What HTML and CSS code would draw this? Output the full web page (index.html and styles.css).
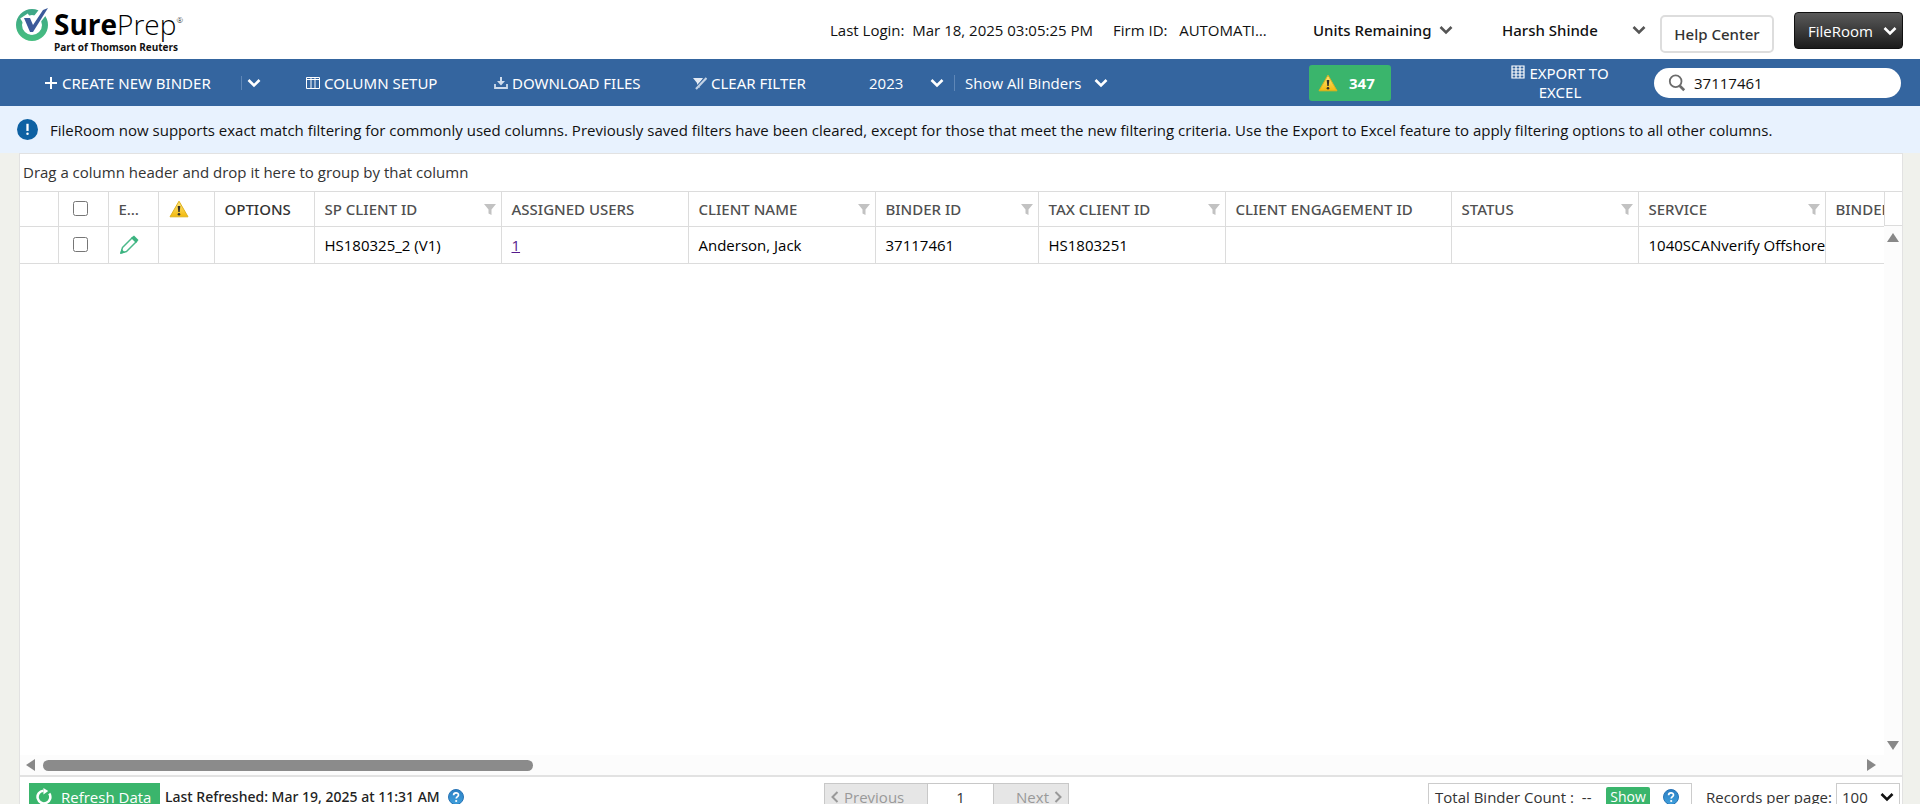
FILE: index.html
```html
<!DOCTYPE html>
<html lang="en">
<head>
<meta charset="utf-8">
<title>SurePrep FileRoom</title>
<link rel="stylesheet" href="styles.css">
</head>
<body>
<svg class="defs" aria-hidden="true">
  <defs>
    <linearGradient id="gold" x1="0" y1="0" x2="0" y2="1"><stop offset="0" stop-color="#ffe680"/><stop offset="1" stop-color="#f2b90c"/></linearGradient>
    <linearGradient id="sky" x1="0" y1="0" x2="0" y2="1"><stop offset="0" stop-color="#2b7fc4"/><stop offset="1" stop-color="#3fa0dc"/></linearGradient>
    <linearGradient id="ring" x1="0" y1="0" x2="0" y2="1"><stop offset="0" stop-color="#3fa787"/><stop offset="1" stop-color="#46bd80"/></linearGradient>
  </defs>
  <symbol id="chev" viewBox="0 0 14 10"><path d="M1.5 2 7 7.5 12.500 2" fill="none" stroke="currentColor" stroke-width="2.600"/></symbol>
  <symbol id="warn" viewBox="0 0 20 18"><path d="M10 1.200 19 16.800H1Z" fill="url(#gold)" stroke="#e0b21c" stroke-width="1" stroke-linejoin="round"/><path d="M8.700 6h2.600l-.6 6H9.300Z" fill="#33302a"/><circle cx="10" cy="14.200" r="1.300" fill="#33302a"/></symbol>
  <symbol id="funnel" viewBox="0 0 14 12"><path d="M1 1h12L8.500 6.500V12l-3-1.500v-4Z" fill="#c2c2c2"/></symbol>
  <symbol id="help" viewBox="0 0 16 16"><circle cx="8" cy="8" r="7.500" fill="url(#sky)" stroke="#2874b5"/><path d="M5.600 6.200c0-3.200 4.900-3.100 4.900-.2 0 1.600-2.300 1.600-2.300 3.500" fill="none" stroke="#fff" stroke-width="1.700"/><circle cx="8.200" cy="12" r="1.100" fill="#fff"/></symbol>
</svg>

<header class="top">
  <div class="logo">
    <svg class="logo-mark" viewBox="0 0 34 34"><circle cx="16" cy="18" r="13" fill="none" stroke="url(#ring)" stroke-width="6"/><path d="M8 9 15 20 30 1" fill="none" stroke="#fff" stroke-width="9"/><path d="M8 11h6l3 7L27 3l5-2-15 24h-3Z" fill="#3c5a9a"/></svg>
    <div class="logo-text">
      <div class="logo-name"><b>Sure</b>Prep<sup>®</sup></div>
      <div class="logo-sub">Part of Thomson Reuters</div>
    </div>
  </div>
  <div class="login">Last Login:&nbsp; Mar 18, 2025 03:05:25 PM</div>
  <div class="firm">Firm ID:&nbsp;&nbsp; AUTOMATI…</div>
  <button class="menu units">Units Remaining<svg class="chev"><use href="#chev"/></svg></button>
  <button class="menu user">Harsh Shinde<svg class="chev"><use href="#chev"/></svg></button>
  <button class="help-center">Help Center</button>
  <button class="fileroom">FileRoom<svg class="chev"><use href="#chev"/></svg></button>
</header>

<nav class="toolbar">
  <button class="tool create"><svg class="ico" viewBox="0 0 14 14"><path d="M7 1v12M1 7h12" stroke="currentColor" stroke-width="2"/></svg>CREATE NEW BINDER</button>
  <button class="tool split" aria-label="More create options"><svg class="chev"><use href="#chev"/></svg></button>
  <button class="tool columns"><svg class="ico" viewBox="0 0 14 14"><path d="M.5 1.500h13v11H.5ZM.5 3.500h13M5 2v10M9 2v10" fill="none" stroke="currentColor"/></svg>COLUMN SETUP</button>
  <button class="tool download"><svg class="ico" viewBox="0 0 14 14"><path d="M1 8v4h12V8" fill="none" stroke="#cfdcec" stroke-width="1.800"/><path d="M6 1h2v4h3L7 9.500 3 5h3Z" fill="#cfdcec"/></svg>DOWNLOAD FILES</button>
  <button class="tool clear"><svg class="ico" viewBox="0 0 14 14"><path d="M0 2h10L6.500 7v5L4 10V7Z" fill="#e4ebf4"/><path d="M2 13 13 2" stroke="#34659f" stroke-width="3"/><path d="M3 13 13.500 2" stroke="#c3d2e5" stroke-width="2.200"/></svg>CLEAR FILTER</button>
  <div class="pick year"><select aria-label="Year"><option>2023</option></select><svg class="chev"><use href="#chev"/></svg></div>
  <div class="pick binders"><select aria-label="Binders"><option>Show All Binders</option></select><svg class="chev"><use href="#chev"/></svg></div>
  <button class="alerts"><svg class="warn"><use href="#warn"/></svg>347</button>
  <button class="tool export"><span><svg class="ico" viewBox="0 0 14 14"><path d="M1 1h12v12H1ZM1 4h12M1 7h12M1 10h12M5 1v12M9 1v12" fill="none" stroke="currentColor" stroke-width="1.200"/></svg>EXPORT TO EXCEL</span></button>
  <label class="search"><svg viewBox="0 0 20 20"><circle cx="8.500" cy="8" r="6.500" fill="none" stroke="#6b6b6b" stroke-width="2"/><path d="m13 13 5 5" stroke="#6b6b6b" stroke-width="3"/></svg><input type="text" value="37117461" aria-label="Search"></label>
</nav>

<div class="notice">
  <svg viewBox="0 0 22 22"><circle cx="11" cy="11" r="11" fill="#0d61a3"/><path d="M11 5v7.500" stroke="#fff" stroke-width="2.400"/><circle cx="11" cy="15.500" r="1.300" fill="#fff"/></svg>
  <span>FileRoom now supports exact match filtering for commonly used columns. Previously saved filters have been cleared, except for those that meet the new filtering criteria. Use the Export to Excel feature to apply filtering options to all other columns.</span>
</div>

<main class="panel">
  <div class="group-drop">Drag a column header and drop it here to group by that column</div>
  <div class="grid">
    <div class="grid-view">
      <table>
        <colgroup><col class="c-tiny"><col class="c-check"><col class="c-check"><col class="c-warn"><col class="c-opt"><col class="c-mid"><col class="c-mid"><col class="c-mid"><col class="c-id"><col class="c-mid"><col class="c-wide"><col class="c-mid"><col class="c-mid"><col class="c-mid"></colgroup>
        <thead><tr>
          <th></th>
          <th><input type="checkbox" aria-label="Select all"></th>
          <th>E…</th>
          <th><svg class="warn"><use href="#warn"/></svg></th>
          <th class="dark">OPTIONS</th>
          <th><div>SP CLIENT ID<svg class="funnel"><use href="#funnel"/></svg></div></th>
          <th>ASSIGNED USERS</th>
          <th><div>CLIENT NAME<svg class="funnel"><use href="#funnel"/></svg></div></th>
          <th><div>BINDER ID<svg class="funnel"><use href="#funnel"/></svg></div></th>
          <th><div>TAX CLIENT ID<svg class="funnel"><use href="#funnel"/></svg></div></th>
          <th>CLIENT ENGAGEMENT ID</th>
          <th><div>STATUS<svg class="funnel"><use href="#funnel"/></svg></div></th>
          <th><div>SERVICE<svg class="funnel"><use href="#funnel"/></svg></div></th>
          <th>BINDER</th>
        </tr></thead>
        <tbody><tr>
          <td></td>
          <td><input type="checkbox" aria-label="Select binder"></td>
          <td><svg class="pencil" viewBox="0 0 20 20"><path d="M2 18 3.500 12.500 13.500 2.500l4 4-10 10Z" fill="#fff" stroke="#4bb98a" stroke-width="1.500" stroke-linejoin="round"/><path d="m12 3 3-2.500 4.500 4.500L17 8Z" fill="#3cb480"/><path d="m1 19 1.500-5 3.500 3.500Z" fill="#3cb480"/></svg></td>
          <td></td>
          <td></td>
          <td>HS180325_2 (V1)</td>
          <td><a href="#">1</a></td>
          <td>Anderson, Jack</td>
          <td>37117461</td>
          <td>HS1803251</td>
          <td></td>
          <td></td>
          <td>1040SCANverify Offshore</td>
          <td></td>
        </tr></tbody>
      </table>
    </div>
    <div class="vside">
      <div class="corner"></div>
      <div class="vbar"><svg viewBox="0 0 12 9"><path d="M6 0 12 9H0Z"/></svg><svg viewBox="0 0 12 9"><path d="M6 9 12 0H0Z"/></svg></div>
    </div>
    <div class="hbar"><svg viewBox="0 0 9 12"><path d="M0 6 9 0v12Z"/></svg><div class="track"><div class="thumb"></div></div><svg viewBox="0 0 9 12"><path d="M9 6 0 0v12Z"/></svg></div>
    <div class="nook"></div>
  </div>
  <footer class="foot">
    <div class="foot-left">
      <button class="refresh"><svg viewBox="0 0 16 16"><path d="M12.500 5.200A6 6 0 1 1 7 2.500" fill="none" stroke="#fff" stroke-width="2.400"/><path d="M7 0v6l4.500-3.200Z" fill="#fff"/></svg>Refresh Data</button>
      <span class="refreshed">Last Refreshed: Mar 19, 2025 at 11:31 AM</span>
      <svg class="help"><use href="#help"/></svg>
    </div>
    <div class="pager">
      <button disabled><svg viewBox="0 0 8 12"><path d="M6.500 1 1.500 6l5 5" fill="none" stroke="currentColor" stroke-width="2"/></svg>Previous</button>
      <input type="text" value="1" aria-label="Page">
      <button disabled>Next<svg viewBox="0 0 8 12"><path d="m1.500 1 5 5-5 5" fill="none" stroke="currentColor" stroke-width="2"/></svg></button>
    </div>
    <div class="foot-right">
      <div class="count"><span>Total Binder Count :&nbsp; --</span><button>Show</button><svg class="help"><use href="#help"/></svg></div>
      <label for="rpp">Records per page:</label>
      <div class="rpp"><select id="rpp"><option>100</option></select><svg class="chev"><use href="#chev"/></svg></div>
    </div>
  </footer>
</main>
</body>
</html>
```
FILE: styles.css
```css
* { box-sizing: border-box; }
body {
  margin: 0;
  height: 100vh;
  overflow: hidden;
  display: flex;
  flex-direction: column;
  background: #f0f1ec;
  color: #111;
  font: 15px/20px "Open Sans", sans-serif;
}
button, input, select { font: inherit; color: inherit; }
button { border: 0; padding: 0; background: none; white-space: nowrap; }
.defs { position: absolute; width: 0; height: 0; }
.chev { width: 14px; height: 10px; flex: none; }

/* Header */
.top {
  height: 59px;
  flex: none;
  display: flex;
  align-items: center;
  padding: 0 17px 0 16px;
  background: #fff;
  white-space: nowrap;
}
.logo { display: flex; gap: 4px; align-items: flex-start; margin-right: auto; padding-top: 1px; }
.logo-mark { width: 34px; height: 34px; }
.logo-name { font: 300 28px/34px "Open Sans", sans-serif; color: #000; }
.logo-name b { font-weight: 700; }
.logo-name sup { font-size: 8px; line-height: 8px; vertical-align: 12px; }
.logo-sub { font: 700 10px/12px "Open Sans", sans-serif; }
.login { width: 283px; }
.firm { width: 200px; }
.menu { display: flex; align-items: center; justify-content: space-between; font-family: "Noto Sans", sans-serif; font-weight: 500; }
.menu .chev { color: #555; }
.units { width: 140px; margin-right: 49px; }
.user { width: 144px; margin-right: 14px; }
.help-center {
  width: 114px;
  height: 38px;
  margin: 8px 20px 0 0;
  border: 2px solid #ddd;
  border-radius: 5px;
  font-family: "Noto Sans", sans-serif;
  font-weight: 500;
  color: #333;
}
.fileroom {
  display: flex;
  align-items: center;
  justify-content: space-between;
  width: 109px;
  height: 37px;
  padding: 0 5px 0 13px;
  margin-top: 2px;
  border: 1px solid #111;
  border-radius: 4px;
  background: linear-gradient(#5a5a5a, #1c1c1c);
  color: #fff;
}

/* Toolbar */
.toolbar {
  height: 47px;
  flex: none;
  display: flex;
  align-items: center;
  padding: 0 19px 0 44px;
  background: #34659f;
  color: #fff;
}
.tool { display: flex; align-items: center; gap: 4px; font-family: "Noto Sans", sans-serif; }
.ico { width: 14px; height: 14px; flex: none; }
.create { width: 197px; }
.split { width: 65px; padding-left: 5px; border-left: 1px solid #5f87b7; height: 14px; }
.columns { width: 188px; }
.download { width: 199px; }
.clear { width: 176px; }
.pick { display: flex; align-items: center; justify-content: space-between; height: 16px; }
.pick select { appearance: none; border: 0; padding: 0; background: none; outline: 0; }
.year { width: 75px; }
.binders { width: 154px; margin-left: 10px; padding-left: 10px; border-left: 1px solid #5f87b7; }
.alerts {
  display: flex;
  align-items: center;
  gap: 11px;
  width: 82px;
  height: 36px;
  margin-left: auto;
  padding-left: 9px;
  border-radius: 3px;
  background: #3ab56c;
  font-weight: 700;
}
.warn { width: 20px; height: 18px; display: block; }
.export { width: 120px; justify-content: center; margin: 0 34px 0 109px; text-align: center; line-height: 19px; white-space: normal; }
.export .ico { margin-right: 4px; }
.search {
  display: flex;
  align-items: center;
  gap: 8px;
  width: 247px;
  height: 30px;
  padding: 0 14px;
  border-radius: 15px;
  background: #fff;
  color: #111;
}
.search svg { width: 18px; height: 18px; flex: none; }
.search input { border: 0; padding: 0; min-width: 0; flex: 1; outline: 0; background: none; }

/* Notice */
.notice {
  display: flex;
  align-items: center;
  gap: 12px;
  height: 47px;
  flex: none;
  padding: 0 17px;
  background: #e8f2fe;
  white-space: nowrap;
}
.notice svg { width: 21px; height: 21px; flex: none; }

/* Panel */
.panel {
  flex: 1;
  min-height: 0;
  margin: 0 17px 0 19px;
  display: flex;
  flex-direction: column;
  border: 1px solid #e2e2e2;
  border-bottom: 0;
  background: #fff;
}
.group-drop { padding: 8px 3px 9px; flex: none; color: #333; }
.grid {
  flex: none;
  height: 586px;
  display: grid;
  grid-template-columns: minmax(0, 1fr) 18px;
  grid-template-rows: minmax(0, 1fr) 20px;
  border-top: 1px solid #dcdcdc;
  border-bottom: 2px solid #e2e2e2;
}
.grid-view { overflow: hidden; }
table { border-collapse: collapse; table-layout: fixed; width: 1992px; }
.c-tiny { width: 38px; }
.c-check { width: 50px; }
.c-warn { width: 56px; }
.c-opt { width: 100px; }
.c-mid { width: 187px; }
.c-id { width: 163px; }
.c-wide { width: 226px; }
th, td {
  padding: 0 4px 0 10px;
  border-right: 1px solid #dcdcdc;
  border-bottom: 1px solid #dcdcdc;
  text-align: left;
  white-space: nowrap;
}
th { height: 34px; font-family: "Noto Sans", sans-serif; font-weight: 500; color: #505050; }
td { height: 37px; color: #000; }
.dark { color: #333; }
th > div { display: flex; justify-content: space-between; align-items: center; }
.funnel { width: 14px; height: 12px; }
table input { width: 15px; height: 15px; margin: 0 0 0 4px; display: block; }
.pencil { width: 20px; height: 20px; display: block; }
td a { color: #551a8b; }
.vside { display: flex; flex-direction: column; }
.corner { height: 34px; border-left: 1px solid #dcdcdc; border-bottom: 1px solid #dcdcdc; }
.vbar, .hbar { display: flex; justify-content: space-between; align-items: center; background: #fcfcfc; fill: #888; }
.vbar { flex: 1; flex-direction: column; padding: 7px 0 5px; }
.vbar svg { width: 12px; height: 9px; }
.hbar { padding: 0 8px 0 6px; }
.hbar svg { width: 9px; height: 12px; flex: none; }
.track { flex: 1; margin: 0 8px; }
.thumb { width: 27%; height: 11px; border-radius: 6px; background: #8b8b8b; }
.nook { background: #fcfcfc; }

/* Footer */
.foot { flex: none; display: flex; align-items: flex-start; padding: 6px 2px 0 9px; color: #333; white-space: nowrap; }
.foot-left { display: flex; align-items: center; width: 795px; }
.refresh {
  display: flex;
  align-items: center;
  gap: 8px;
  width: 131px;
  height: 27px;
  padding-left: 7px;
  background: #3ab56c;
  color: #fff;
}
.refresh svg { width: 17px; height: 17px; }
.refreshed { margin: 0 8px 0 5px; color: #222; font: 500 14px/20px "Noto Sans", sans-serif; }
.help { width: 16px; height: 16px; flex: none; }
.pager { display: flex; height: 27px; border: 1px solid #c8c8c8; }
.pager button { display: flex; align-items: center; gap: 5px; background: #e6e6e6; color: #999; padding: 0 6px; }
.pager button:first-child { width: 102px; }
.pager button:last-child { width: 74px; justify-content: flex-end; }
.pager svg { width: 8px; height: 12px; }
.pager input { width: 67px; border: solid #c8c8c8; border-width: 0 1px; padding: 0; text-align: center; background: #fff; }
.foot-right { display: flex; align-items: center; margin-left: auto; }
.count { display: flex; align-items: center; width: 264px; height: 27px; padding: 0 12px 0 6px; margin-right: 14px; border: 1px solid #ccc; }
.count button { width: 44px; height: 20px; margin: 0 13px 0 auto; border-radius: 2px; background: #3ab56c; color: #fff; font-size: 14px; }
.foot-right label { width: 130px; }
.rpp { display: flex; align-items: center; justify-content: space-between; width: 64px; height: 27px; padding: 0 5px; border: 1px solid #ccc; }
.rpp select { appearance: none; border: 0; padding: 0; background: none; }
.rpp .chev { color: #111; }
```
